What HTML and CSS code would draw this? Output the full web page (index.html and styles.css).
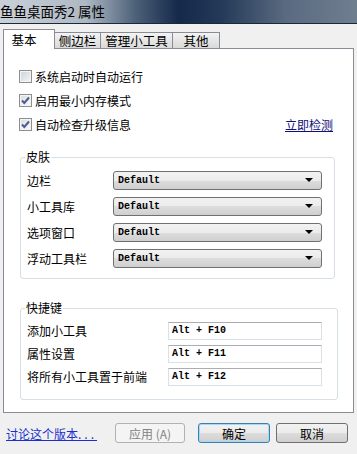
FILE: index.html
```html
<!DOCTYPE html>
<html lang="zh-CN">
<head>
    <meta charset="UTF-8">
    <title>鱼鱼桌面秀2 属性</title>
    <link rel="stylesheet" href="styles.css">
</head>
<body>
    <div class="titlebar">鱼鱼桌面秀2 属性</div>

    <div class="tabs">
        <div class="tab active">基本</div>
        <div class="tab">侧边栏</div>
        <div class="tab">管理小工具</div>
        <div class="tab">其他</div>
    </div>

    <div class="panel">
        <div class="checks">
            <label class="check-row">
                <span class="box"></span>系统启动时自动运行
            </label>
            <label class="check-row">
                <span class="box checked"><svg width="11" height="11" viewBox="0 0 11 11"><path d="M2 5.5 L4.3 8 L9 2.5" fill="none" stroke="#4a5c94" stroke-width="2"/></svg></span>启用最小内存模式
            </label>
            <div class="check-row">
                <label class="check-label"><span class="box checked"><svg width="11" height="11" viewBox="0 0 11 11"><path d="M2 5.5 L4.3 8 L9 2.5" fill="none" stroke="#4a5c94" stroke-width="2"/></svg></span>自动检查升级信息</label>
                <a class="check-now" href="#">立即检测</a>
            </div>
        </div>

        <fieldset class="group skins">
            <legend>皮肤</legend>
            <div class="skin-row"><span class="skin-label">边栏</span><div class="combo">Default<span class="arrow"></span></div></div>
            <div class="skin-row"><span class="skin-label">小工具库</span><div class="combo">Default<span class="arrow"></span></div></div>
            <div class="skin-row"><span class="skin-label">选项窗口</span><div class="combo">Default<span class="arrow"></span></div></div>
            <div class="skin-row"><span class="skin-label">浮动工具栏</span><div class="combo">Default<span class="arrow"></span></div></div>
        </fieldset>

        <fieldset class="group keys">
            <legend>快捷键</legend>
            <div class="key-row"><span class="key-label">添加小工具</span><div class="textbox">Alt + F10</div></div>
            <div class="key-row"><span class="key-label">属性设置</span><div class="textbox">Alt + F11</div></div>
            <div class="key-row"><span class="key-label">将所有小工具置于前端</span><div class="textbox">Alt + F12</div></div>
        </fieldset>
    </div>

    <div class="footer">
        <a class="discuss" href="#">讨论这个版本<span class="dots">...</span></a>
        <div class="buttons">
            <button class="btn apply" disabled>应用 (A)</button>
            <button class="btn ok">确定</button>
            <button class="btn">取消</button>
        </div>
    </div>
</body>
</html>
```

FILE: styles.css
```css
* {
    box-sizing: border-box;
    margin: 0;
    padding: 0;
}
body {
    width: 357px;
    height: 454px;
    background-color: #f0f0f0;
    font-family: "Noto Sans CJK SC", "DejaVu Sans", sans-serif;
    font-size: 12px;
    color: #000;
    overflow: hidden;
}
.titlebar {
    height: 24px;
    line-height: 23px;
    font-size: 13.5px;
    border-bottom: 1px solid #1b2838;
    background-image: linear-gradient(90deg, #c9d0d8 0, #aeb8c3 24%, #4c6078 38%, #15294a 50%, #243a58 62%, #5a6a80 80%, #6f7e8f 100%);
}

/* tab strip */
.tabs {
    display: flex;
    align-items: flex-end;
    height: 19px;
    margin-top: 5px;
    margin-left: 3px;
}
.tab {
    height: 16px;
    line-height: 15px;
    text-align: center;
    white-space: nowrap;
    border: 1px solid #898c95;
    border-bottom: none;
    border-left: none;
    background-image: linear-gradient(#f3f3f3, #e6e6e6 50%, #d9d9d9);
    font-size: 12.5px;
}
.tab:nth-child(2) { width: 46px; }
.tab:nth-child(3) { width: 72px; }
.tab:nth-child(4) { width: 47px; }
.tab.active {
    position: relative;
    z-index: 1;
    width: 52px;
    height: 20px;
    line-height: 20px;
    margin-bottom: -1px;
    padding-right: 10px;
    border-left: 1px solid #898c95;
    background: #fff;
}

/* main panel */
.panel {
    width: 351px;
    margin-left: 3px;
    border: 1px solid #898c95;
    background-color: #fff;
    padding-top: 15px;
    padding-bottom: 12px;
}
.check-row {
    display: flex;
    align-items: center;
    height: 24px;
    padding-left: 15px;
}
.check-label {
    display: flex;
    align-items: center;
}
.box {
    display: flex;
    align-items: center;
    justify-content: center;
    width: 13px;
    height: 13px;
    margin-right: 3px;
    border: 1px solid #8e8f8f;
    background-image: linear-gradient(135deg, #cbd3dc, #f4f6f8);
    box-shadow: inset 0 0 0 1px #f4f4f4;
}
.box.checked {
    background-image: linear-gradient(135deg, #dcdcdc, #fbfbfb);
}
.check-now {
    margin-left: auto;
    margin-right: 20px;
    color: #10107a;
    text-decoration: underline;
}

/* group boxes */
.group {
    border: 1px solid #d5dfe5;
    border-radius: 3px;
    padding: 2px 12px 7px 4px;
    min-width: 0;
}
.group legend {
    line-height: 16px;
    padding: 0 1px;
}
.skins {
    margin: 13px 18px 0 16px;
}
.keys {
    margin: 21px 15px 0 16px;
    padding-top: 3px;
    padding-bottom: 11px;
}
.skin-row {
    display: flex;
    align-items: center;
    height: 26px;
}
.skin-label {
    width: 88px;
    padding-left: 2px;
}
.combo {
    display: flex;
    align-items: center;
    width: 209px;
    height: 19px;
    padding-left: 4px;
    border: 1px solid #707070;
    border-radius: 3px;
    background-image: linear-gradient(#f2f2f2, #ebebeb 50%, #dddddd 50%, #cfcfcf);
    font-family: "Liberation Mono", monospace;
    font-size: 10px;
    font-weight: bold;
}
.arrow {
    margin-left: auto;
    margin-right: 8px;
    width: 0;
    height: 0;
    border-left: 4px solid transparent;
    border-right: 4px solid transparent;
    border-top: 4px solid #000;
}
.key-row {
    display: flex;
    align-items: center;
    height: 23px;
}
.key-label {
    width: 143px;
    padding-left: 2px;
}
.textbox {
    display: flex;
    align-items: center;
    width: 154px;
    height: 18px;
    padding-left: 3px;
    border: 1px solid #dbdfe6;
    border-top-color: #abadb3;
    background: #fff;
    font-family: "Liberation Mono", monospace;
    font-size: 10px;
    font-weight: bold;
}

/* bottom bar */
.footer {
    display: flex;
    align-items: center;
    height: 40px;
    padding: 0 9px 0 6px;
}
.discuss {
    color: #1b2fd0;
    text-decoration: underline;
}
.dots {
    letter-spacing: 3px;
}
.buttons {
    display: flex;
    margin-left: auto;
}
.btn {
    width: 72px;
    height: 20px;
    border: 1px solid #707070;
    border-radius: 3px;
    background-image: linear-gradient(#f2f2f2, #ebebeb 50%, #dddddd 50%, #cfcfcf);
    font-family: "Noto Sans CJK SC", sans-serif;
    font-size: 12px;
    color: #000;
}
.btn + .btn {
    margin-left: 6px;
}
.apply {
    width: 70px;
    margin-right: 7px;
    border-color: #adb2b5;
    background: #f4f4f4;
    color: #838383;
}
.ok {
    border-color: #3c7fb1;
    box-shadow: inset 0 0 0 1px #a7d8f3;
}
```
